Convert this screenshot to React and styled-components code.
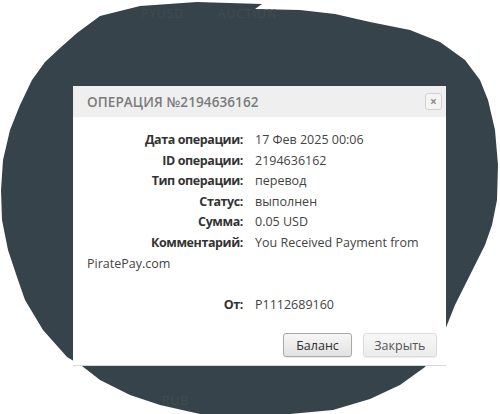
import React from 'react';
import styled, { createGlobalStyle } from 'styled-components';

const GlobalStyle = createGlobalStyle`
  html, body {
    margin: 0;
    padding: 0;
    background: #ffffff;
  }
  body {
    font-family: "Open Sans", "Liberation Sans", sans-serif;
  }
`;

const Stage = styled.div`
  position: relative;
  width: 500px;
  height: 414px;
  overflow: hidden;
  padding: 86px 0 0 73px;
  box-sizing: border-box;
`;

const Blob = styled.svg`
  position: absolute;
  left: 0;
  top: 0;
  width: 500px;
  height: 414px;
`;

const Ghost = styled.text`
  fill: #404b53;
  font-family: "Open Sans", sans-serif;
  font-size: 12px;
  letter-spacing: 1px;
`;

const Modal = styled.div`
  position: relative;
  width: 373px;
  height: 280px;
  background: #ffffff;
  border-bottom: 1px solid #d8d8d8;
  box-sizing: border-box;
  display: flex;
  flex-direction: column;
`;

const Header = styled.div`
  height: 31px;
  background: #efefef;
  display: flex;
  align-items: center;
  justify-content: space-between;
  padding: 0 4px 0 14px;
  box-sizing: border-box;
`;

const Title = styled.div`
  color: #7b7b7b;
  font-size: 13.5px;
  font-weight: 600;
  letter-spacing: 0.1px;
`;

const CloseBox = styled.div`
  width: 17px;
  height: 17px;
  border: 1px solid #d2d2d2;
  border-radius: 3px;
  background: #f4f4f4;
  box-sizing: border-box;
  display: flex;
  align-items: center;
  justify-content: center;
  color: #8a8a8a;
  font-size: 12px;
  font-weight: 700;
  line-height: 1;
`;

const Body = styled.div`
  padding: 13px 14px 0 14px;
  font-size: 12.5px;
  line-height: 20.6px;
  color: #444;
`;

const Row = styled.div`
  min-height: 20.6px;
`;

const Label = styled.span`
  display: inline-block;
  width: 156px;
  margin-right: 12px;
  text-align: right;
  font-weight: 700;
  letter-spacing: -0.4px;
  color: #333;
`;

const Footer = styled.div`
  margin-top: auto;
  display: flex;
  justify-content: flex-end;
  gap: 11px;
  padding: 0 9px 8px 0;
`;

const Button = styled.button`
  height: 24px;
  padding: 0 ${(p) => (p.$primary ? '12px' : '10.5px')};
  border-radius: 3px;
  font-family: "Open Sans", "Liberation Sans", sans-serif;
  font-size: 12.5px;
  color: ${(p) => (p.$primary ? '#2e2e2e' : '#555')};
  border: 1px solid ${(p) => (p.$primary ? '#a9a9a9' : '#dcdcdc')};
  background: ${(p) =>
    p.$primary
      ? 'linear-gradient(#f6f6f6, #e2e2e2)'
      : 'linear-gradient(#f7f7f7, #ececec)'};
  box-shadow: 0 1px 1px rgba(0, 0, 0, 0.08);
`;

const rows = [
  ['Дата операции:', '17 Фев 2025 00:06'],
  ['ID операции:', '2194636162'],
  ['Тип операции:', 'перевод'],
  ['Статус:', 'выполнен'],
  ['Сумма:', '0.05 USD'],
  ['Комментарий:', 'You Received Payment from PiratePay.com'],
];

const blobPath =
  'M197 2 L262 4 L255 9 L300 10 L335 14 L370 22 L410 30 L440 42 L465 60 L480 80 L488 100 L495 130 L498 165 L497 200 L492 225 L485 245 L475 265 L465 285 L455 305 L447 325 L438 350 L425 367 L400 385 L370 399 L333 410 L290 414 L200 414 L160 405 L130 395 L100 380 L82 366 L67 357 L43 330 L25 300 L18 280 L8 250 L2 220 L1 190 L3 160 L10 130 L20 105 L32 80 L45 62 L60 48 L77 33 L100 16 L140 6 Z';

const App = () => (
  <>
    <GlobalStyle />
    <Stage>
      <Blob viewBox="0 0 500 414">
        <path d={blobPath} fill="#37434b" />
        <Ghost x="141" y="18">PYUSD</Ghost>
        <Ghost x="218" y="18">AUCTION</Ghost>
        <Ghost x="162" y="405" fontSize="10">RUB</Ghost>
      </Blob>
      <Modal>
        <Header>
          <Title>ОПЕРАЦИЯ №2194636162</Title>
          <CloseBox>×</CloseBox>
        </Header>
        <Body>
          {rows.map(([label, value]) => (
            <Row key={label}>
              <Label>{label}</Label>
              {value}
            </Row>
          ))}
          <Row />
          <Row>
            <Label>От:</Label>
            P1112689160
          </Row>
        </Body>
        <Footer>
          <Button $primary>Баланс</Button>
          <Button>Закрыть</Button>
        </Footer>
      </Modal>
    </Stage>
  </>
);

export default App;
